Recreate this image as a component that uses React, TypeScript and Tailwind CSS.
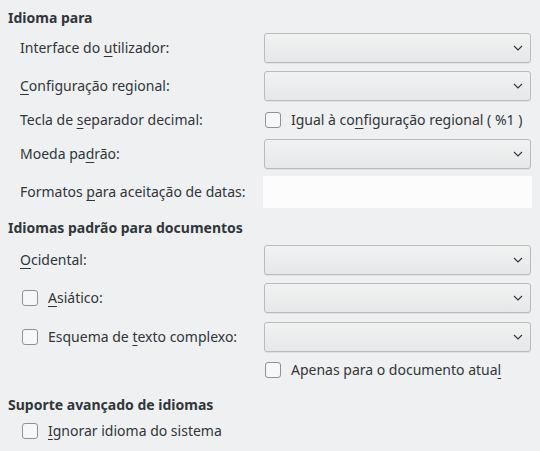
import React from 'react';

const Combo: React.FC = () => (
  <div className="w-[267px] h-[30px] rounded-[3px] border border-[#b9bbbd] bg-gradient-to-b from-[#f1f2f2] to-[#e6e7e8] shadow-[0_1px_0_rgba(0,0,0,0.06)] flex items-center justify-end pr-[7px]">
    <svg width="10" height="6" viewBox="0 0 10 6" className="text-[#31363b]">
      <path d="M1 1 L5 5 L9 1" fill="none" stroke="currentColor" strokeWidth="1.1" />
    </svg>
  </div>
);

const Check: React.FC = () => (
  <div className="w-4 h-4 shrink-0 rounded-[3px] border border-[#8f9295] bg-[#f7f7f7]" />
);

const U: React.FC<{ children: React.ReactNode }> = ({ children }) => (
  <span className="underline decoration-1 underline-offset-[3px]">{children}</span>
);

const Row: React.FC<{ label: React.ReactNode; children?: React.ReactNode; cls: string }> = ({ label, children, cls }) => (
  <div className={`flex items-center ${cls}`}>
    <div className="w-[244px] flex items-center">{label}</div>
    <div className="flex items-center">{children}</div>
  </div>
);

export default function App() {
  return (
    <div className="w-[540px] h-[451px] overflow-hidden bg-[#eff0f1] text-[#31363b] font-['Noto_Sans',sans-serif] text-[14px] leading-[18px] pl-2">
      <div className="h-[18px] mt-[9px] font-bold">Idioma para</div>
      <div className="pl-3">
        <Row cls="h-[30px] mt-[6px]" label={<span>Interface do <U>u</U>tilizador:</span>}>
          <Combo />
        </Row>
        <Row cls="h-[30px] mt-2" label={<span><U>C</U>onfiguração regional:</span>}>
          <Combo />
        </Row>
        <Row cls="h-[30px] mt-1" label={<span>Tecla de <U>s</U>eparador decimal:</span>}>
          <div className="pl-px flex items-center gap-[10px]">
            <Check />
            <span>Igual à co<U>n</U>figuração regional ( %1 )</span>
          </div>
        </Row>
        <Row cls="h-[30px] mt-1" label={<span>Moeda pa<U>d</U>rão:</span>}>
          <Combo />
        </Row>
        <Row cls="h-[32px] mt-[7px]" label={<span>Formatos <U>p</U>ara aceitação de datas:</span>}>
          <div className="w-[269px] h-[32px] -ml-px bg-[#fcfcfc]" />
        </Row>
      </div>

      <div className="h-[18px] mt-[11px] font-bold">Idiomas padrão para documentos</div>
      <div className="pl-3">
        <Row cls="h-[30px] mt-2" label={<span><U>O</U>cidental:</span>}>
          <Combo />
        </Row>
        <Row cls="h-[30px] mt-2" label={
          <div className="pl-[2px] flex items-center gap-[10px]"><Check /><span><U>A</U>siático:</span></div>
        }>
          <Combo />
        </Row>
        <Row cls="h-[30px] mt-[9px]" label={
          <div className="pl-[2px] flex items-center gap-[10px]"><Check /><span>Esquema de <U>t</U>exto complexo:</span></div>
        }>
          <Combo />
        </Row>
        <Row cls="h-[30px] mt-[3px]" label={null}>
          <div className="pl-px flex items-center gap-[10px]">
            <Check />
            <span>Apenas para o documento atua<U>l</U></span>
          </div>
        </Row>
      </div>

      <div className="h-[18px] mt-[11px] font-bold">Suporte avançado de idiomas</div>
      <div className="pl-3">
        <div className="h-[30px] mt-[2px] pl-[2px] flex items-center gap-[10px]">
          <Check />
          <span><U>I</U>gnorar idioma do sistema</span>
        </div>
      </div>
    </div>
  );
}
